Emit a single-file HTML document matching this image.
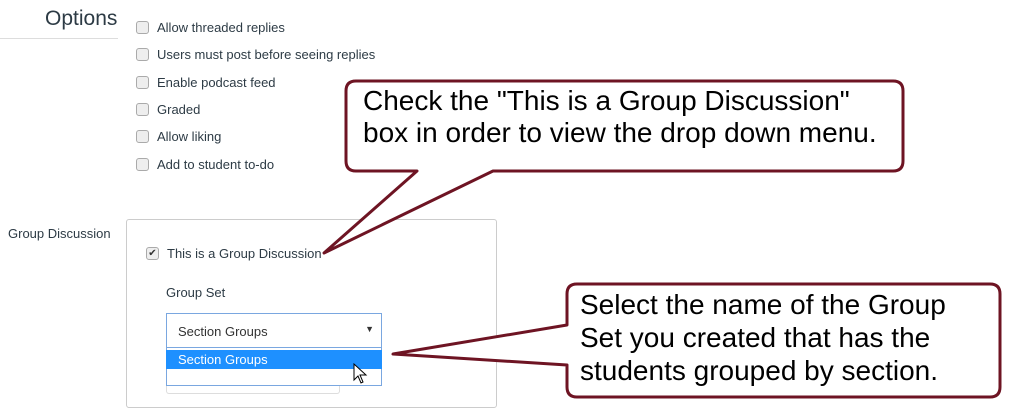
<!DOCTYPE html>
<html><head><meta charset="utf-8"><style>
body{margin:0;width:1024px;height:420px;background:#fff;position:relative;overflow:hidden;font-family:"Liberation Sans",sans-serif;color:#333}
.a{position:absolute}
.opt{position:absolute;left:136px;font-size:13px;color:#2d3b45;display:flex;align-items:center}
.cb{width:13px;height:13px;border:1px solid #aaa;border-radius:3px;background:#eee;margin-right:8px;box-sizing:border-box}
.ct{position:absolute;font-size:28px;color:#000;line-height:32px;white-space:nowrap}
</style></head><body>
<div class="a" style="left:45px;top:7px;font-size:21px;color:#2d3b45">Options</div>
<div class="a" style="left:0;top:38px;width:118px;height:1px;background:#ddd"></div>
<div class="opt" style="top:20px"><span class="cb"></span>Allow threaded replies</div>
<div class="opt" style="top:47px"><span class="cb"></span>Users must post before seeing replies</div>
<div class="opt" style="top:75px"><span class="cb"></span>Enable podcast feed</div>
<div class="opt" style="top:102px"><span class="cb"></span>Graded</div>
<div class="opt" style="top:129px"><span class="cb"></span>Allow liking</div>
<div class="opt" style="top:157px"><span class="cb"></span>Add to student to-do</div>
<div class="a" style="left:8px;top:226px;font-size:13px;color:#2d3b45">Group Discussion</div>
<div class="a" style="left:126px;top:219px;width:371px;height:189px;border:1px solid #ccc;border-radius:3px;box-sizing:border-box"></div>
<div class="opt" style="left:146px;top:246px"><span class="cb" style="display:flex;align-items:center;justify-content:center;font-size:10px;color:#333">✔</span>This is a Group Discussion</div>
<div class="a" style="left:166px;top:285px;font-size:13px;color:#2d3b45">Group Set</div>
<div class="a" style="left:166px;top:313px;width:216px;height:35px;border:1px solid #7aa7e0;box-sizing:border-box;font-size:13px;color:#333;padding:10px 0 0 11px">Section Groups<span style="position:absolute;right:7px;top:10px;font-size:9px">▼</span></div>
<div class="a" style="left:166px;top:348px;width:216px;height:38px;border:1px solid #7aa7e0;border-top:none;box-sizing:border-box;background:#fff"></div>
<div class="a" style="left:166px;top:350px;width:216px;height:19px;background:#1e90ff;color:#fff;font-size:13px;padding:0 0 0 12px;box-sizing:border-box;line-height:19px">Section Groups</div>
<div class="a" style="left:166px;top:386px;width:174px;height:8px;border:1px solid #ddd;border-top:none;border-radius:0 0 3px 3px;box-sizing:border-box"></div>
<svg class="a" style="left:0;top:0" width="1024" height="420">
<path d="M356 81 H893 Q903 81 903 91 V161 Q903 171 893 171 H493 L324 253 L417 171 H356 Q346 171 346 161 V91 Q346 81 356 81 Z" fill="#fff" stroke="#6e1423" stroke-width="3" stroke-linejoin="round"/>
<path d="M577 284 H990 Q1000 284 1000 294 V387 Q1000 397 990 397 H577 Q567 397 567 387 V365 L393 354 L567 325 V294 Q567 284 577 284 Z" fill="#fff" stroke="#6e1423" stroke-width="3" stroke-linejoin="round"/>
<path d="M354 364 L354 380 L358 376 L361 383 L363 382 L360 375 L366 375 Z" fill="#fff" stroke="#000" stroke-width="1"/>
</svg>
<div class="ct" style="left:363px;top:85px">Check the "This is a Group Discussion"</div>
<div class="ct" style="left:363px;top:117px">box in order to view the drop down menu.</div>
<div class="ct" style="left:580px;top:289px">Select the name of the Group</div>
<div class="ct" style="left:580px;top:322px">Set you created that has the</div>
<div class="ct" style="left:580px;top:355px">students grouped by section.</div>
</body></html>
